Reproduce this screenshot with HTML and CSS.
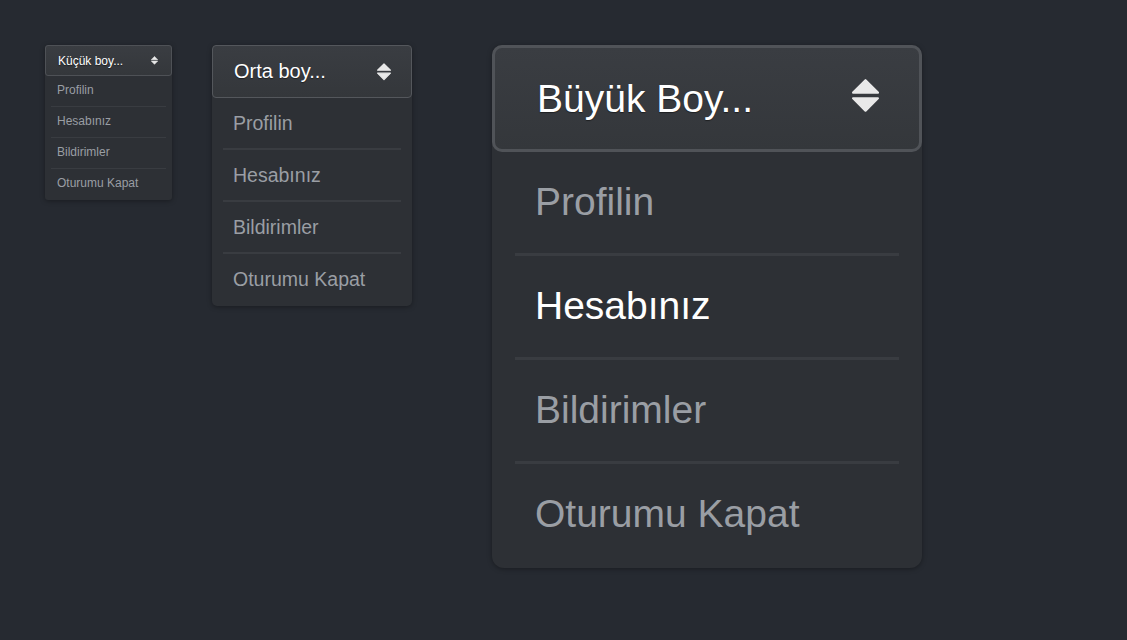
FILE: index.html
```html
<!DOCTYPE html>
<html lang="tr">
<head>
<meta charset="utf-8">
<title>Dropdowns</title>
<link rel="stylesheet" href="styles.css">
</head>
<body>
<div class="stage">
  <div class="dd dd-sm">
    <div class="dd-head">
      <span class="dd-label">Küçük boy...</span>
      <svg class="dd-icon" viewBox="0 0 24 30"><path d="M12 1 L23 12 H1 Z M1 17 H23 L12 28 Z"/></svg>
    </div>
    <ul class="dd-list">
      <li>Profilin</li>
      <li>Hesabınız</li>
      <li>Bildirimler</li>
      <li>Oturumu Kapat</li>
    </ul>
  </div>
  <div class="dd dd-md">
    <div class="dd-head">
      <span class="dd-label">Orta boy...</span>
      <svg class="dd-icon" viewBox="0 0 24 30"><path d="M12 1 L23 12 H1 Z M1 17 H23 L12 28 Z"/></svg>
    </div>
    <ul class="dd-list">
      <li>Profilin</li>
      <li>Hesabınız</li>
      <li>Bildirimler</li>
      <li>Oturumu Kapat</li>
    </ul>
  </div>
  <div class="dd dd-lg">
    <div class="dd-head">
      <span class="dd-label">Büyük Boy...</span>
      <svg class="dd-icon" viewBox="0 0 24 30"><path d="M12 1 L23 12 H1 Z M1 17 H23 L12 28 Z"/></svg>
    </div>
    <ul class="dd-list">
      <li>Profilin</li>
      <li class="is-active">Hesabınız</li>
      <li>Bildirimler</li>
      <li>Oturumu Kapat</li>
    </ul>
  </div>
</div>
</body>
</html>
```

FILE: styles.css
```css
html, body {
  margin: 0;
  padding: 0;
  background: #262a31;
  height: 100%;
}
body {
  font-family: "Liberation Sans", Arial, sans-serif;
  color: #9a9ea4;
}
.stage {
  display: flex;
  align-items: flex-start;
  padding: 45px 0 0 45px;
}
.dd {
  background: #2d3035;
  box-shadow: 0 1px 5px rgba(0, 0, 0, 0.35);
  flex: none;
}
.dd-head {
  display: flex;
  align-items: center;
  justify-content: space-between;
  background: linear-gradient(#3a3d42, #34373b);
  color: #ffffff;
  text-shadow: 0 1px 1px rgba(0, 0, 0, 0.45);
}
.dd-icon {
  display: block;
  fill: #e9e9e9;
  stroke: #e9e9e9;
  stroke-width: 2;
  stroke-linejoin: round;
}
.dd-list {
  list-style: none;
  margin: 0;
}
.dd-list li {
  white-space: nowrap;
}
.dd-list li:last-child {
  border-bottom: none !important;
}
.dd-list li.is-active {
  color: #ffffff;
}

/* small */
.dd-sm {
  width: 127px;
  border-radius: 3px;
}
.dd-sm .dd-head {
  border: 1px solid #4e5156;
  border-radius: 3px;
  padding: 8px 13px 6px 12px;
  line-height: 15px;
  font-size: 12px;
}
.dd-sm .dd-icon {
  width: 7px;
  height: 11px;
  margin-top: -2px;
}
.dd-sm .dd-list {
  padding: 0 0 1px;
  font-size: 12px;
}
.dd-sm .dd-list li {
  margin: 0 6px;
  padding: 7px 0 9px 6px;
  line-height: 14px;
  border-bottom: 1px solid #393c41;
}

/* medium */
.dd-md {
  width: 200px;
  margin-left: 40px;
  border-radius: 5px;
}
.dd-md .dd-head {
  border: 1px solid #54575c;
  border-radius: 4px;
  padding: 14px 20px 14px 21px;
  line-height: 23px;
  font-size: 20px;
}
.dd-md .dd-icon {
  width: 14px;
  height: 18px;
}
.dd-md .dd-list {
  padding: 0 0 2px;
  font-size: 19.5px;
}
.dd-md .dd-list li {
  margin: 0 11px;
  padding: 14px 0 14px 10px;
  line-height: 22px;
  border-bottom: 2px solid #393c41;
}

/* large */
.dd-lg {
  width: 430px;
  margin-left: 80px;
  border-radius: 10px 10px 12px 12px;
}
.dd-lg .dd-head {
  border: 3px solid #505358;
  border-radius: 10px;
  padding: 28px 40px 28px 42px;
  line-height: 45px;
  font-size: 39px;
}
.dd-lg .dd-icon {
  width: 27px;
  height: 34px;
  margin-top: -5px;
}
.dd-lg .dd-list {
  padding: 0 0 3px;
  font-size: 39px;
}
.dd-lg .dd-list li {
  margin: 0 23px;
  padding: 27px 0 29px 20px;
  line-height: 45px;
  border-bottom: 3px solid #393c41;
}
```
